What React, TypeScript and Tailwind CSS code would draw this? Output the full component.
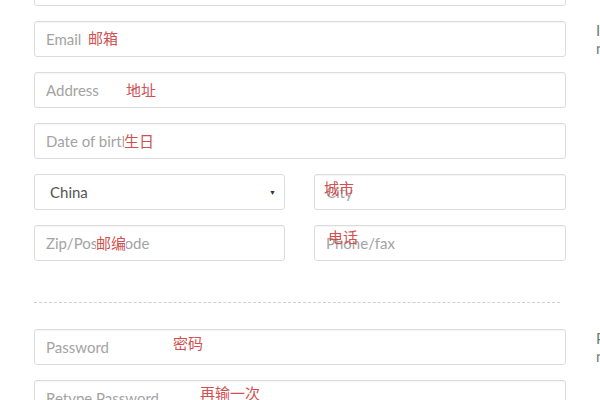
import React from 'react';

type Note = { text: string; top: number; left: number; cover?: boolean };

function Field({ placeholder, note, width = 'w-[532px]' }: { placeholder: string; note?: Note; width?: string }) {
  return (
    <div className={`relative shrink-0 ${width} h-[36px]`}>
      <input
        readOnly
        placeholder={placeholder}
        className="w-full h-full border border-[#dcdcdc] rounded-[3px] px-[11px] text-[15px] text-[#555] placeholder:text-[#a3a3a3] bg-white outline-none shadow-[inset_0_1px_1px_rgba(0,0,0,0.04)]"
      />
      {note && (
        <span
          className={`absolute text-[15px] leading-[20px] text-[#d05050] font-['Noto_Sans_CJK_SC',sans-serif] ${note.cover ? 'bg-white' : ''}`}
          style={{ top: note.top, left: note.left }}
        >
          {note.text}
        </span>
      )}
    </div>
  );
}

function Help({ lines }: { lines: string[] }) {
  return (
    <div className="pl-[30px] h-[36px] text-[15px] leading-[18px] text-[#777] whitespace-nowrap">
      {lines.map((l) => (
        <div key={l}>{l}</div>
      ))}
    </div>
  );
}

export default function App() {
  return (
    <div className="w-[600px] h-[400px] overflow-hidden bg-white font-['Lato','Liberation_Sans',sans-serif]">
      <div className="pl-[34px] -mt-[30px] flex flex-col gap-[15px]">
        {/* Contact */}
        <Field placeholder="Name" />
        <div className="flex">
          <Field placeholder="Email" note={{ text: '邮箱', top: 7, left: 54 }} />
          <Help lines={['I will never share your email', 'nor sell it to anyone']} />
        </div>
        <Field placeholder="Address" note={{ text: '地址', top: 8, left: 92 }} />
        <Field placeholder="Date of birth" note={{ text: '生日', top: 8, left: 90, cover: true }} />
        <div className="flex gap-[29px] w-[532px]">
          <div className="relative shrink-0 w-[251px] h-[36px] border border-[#dcdcdc] rounded-[3px] bg-white flex items-center pl-[15px] pr-[8px] text-[15px] text-[#555]">
            <span className="flex-1">China</span>
            <span className="text-[7px] text-[#333]">▼</span>
          </div>
          <Field width="w-[252px]" placeholder="City" note={{ text: '城市', top: 4, left: 10 }} />
        </div>
        <div className="flex gap-[29px] w-[532px]">
          <Field width="w-[251px]" placeholder="Zip/Postal code" note={{ text: '邮编', top: 8, left: 62, cover: true }} />
          <Field width="w-[252px]" placeholder="Phone/fax" note={{ text: '电话', top: 2, left: 14 }} />
        </div>

        {/* Divider */}
        <div className="w-[526px] border-t border-dashed border-[#cfcfcf] mt-[26px] mb-[11px]" />

        {/* Account */}
        <div className="flex">
          <Field placeholder="Password" note={{ text: '密码', top: 4, left: 139 }} />
          <Help lines={['Password must be at least', 'not less than 6 characters']} />
        </div>
        <Field placeholder="Retype Password" note={{ text: '再输一次', top: 3, left: 166 }} />
      </div>
    </div>
  );
}
